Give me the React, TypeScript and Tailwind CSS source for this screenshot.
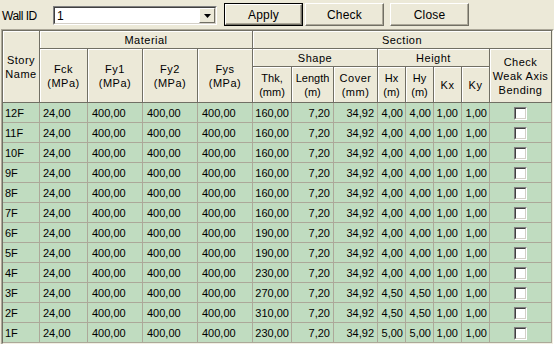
const font = { fontFamily: '"Liberation Sans", Arial, sans-serif' };

const cols =
  'grid grid-cols-[37px_48px_55px_55px_55px_39px_42px_44px_28px_28px_28px_28px_62px]';

const rows = [
  { story: '12F', thk: '160,00', h: '4,00' },
  { story: '11F', thk: '160,00', h: '4,00' },
  { story: '10F', thk: '160,00', h: '4,00' },
  { story: '9F', thk: '160,00', h: '4,00' },
  { story: '8F', thk: '160,00', h: '4,00' },
  { story: '7F', thk: '160,00', h: '4,00' },
  { story: '6F', thk: '190,00', h: '4,00' },
  { story: '5F', thk: '190,00', h: '4,00' },
  { story: '4F', thk: '230,00', h: '4,00' },
  { story: '3F', thk: '270,00', h: '4,50' },
  { story: '2F', thk: '310,00', h: '4,50' },
  { story: '1F', thk: '230,00', h: '5,00' },
];

const head =
  'flex items-center justify-center text-center border-r border-b border-[#716f64] bg-[#ece9d8] shadow-[inset_1px_1px_0_#fff] leading-[14px] tracking-[0.5px]';

const cell =
  'flex items-center pt-[2px] border-r border-b border-[#aca899] bg-[#c0dcc0] overflow-hidden whitespace-nowrap';

function Button({ label, isDefault }: { label: string; isDefault?: boolean }) {
  return (
    <div
      className={`mt-[3px] h-[23px] w-[79px] ${
        isDefault ? 'border border-black' : ''
      }`}
    >
      <div className="flex h-full w-full items-center justify-center border border-white border-r-[#716f64] border-b-[#716f64] bg-[#ece9d8] text-[12px] tracking-[0.2px] text-black shadow-[inset_-1px_-1px_0_#aca899]">
        {label}
      </div>
    </div>
  );
}

function CheckBox() {
  return (
    <span className="block h-[13px] w-[13px] border border-[#808080] border-r-white border-b-white">
      <span className="block h-full w-full border border-[#404040] border-r-[#d4d0c8] border-b-[#d4d0c8] bg-white" />
    </span>
  );
}

export default function App() {
  return (
    <div
      className="h-[344px] w-[554px] overflow-hidden bg-[#ece9d8] text-black"
      style={font}
    >
      {/* toolbar */}
      <div className="flex h-[29px] items-start">
        <div className="ml-[2px] mt-[8px] w-[51px] text-[12px] leading-[16px] tracking-[-0.5px]">
          Wall ID
        </div>
        <div className="mt-[6px] h-[19px] w-[164px] border border-[#808080] border-r-white border-b-white">
          <div className="flex h-full w-full items-center border border-[#404040] border-r-[#d4d0c8] border-b-[#d4d0c8] bg-white pl-[2px]">
            <span className="flex-1 text-[12px] leading-[14px]">1</span>
            <div className="flex h-[15px] w-[16px] items-center justify-center border border-white border-r-[#716f64] border-b-[#716f64] bg-[#ece9d8]">
              <svg width="7" height="4" viewBox="0 0 7 4">
                <path d="M0 0h7L3.5 4z" fill="#000" />
              </svg>
            </div>
          </div>
        </div>
        <div className="ml-[7px]">
          <Button label="Apply" isDefault />
        </div>
        <div className="ml-[2px]">
          <Button label="Check" />
        </div>
        <div className="ml-[6px]">
          <Button label="Close" />
        </div>
      </div>

      {/* grid */}
      <div className="ml-[1px] w-[553px] border border-[#aca899] border-r-white border-b-white">
        <div className="border border-[#716f64] border-r-[#f1efe2] border-b-[#f1efe2]">
          <div className={`${cols} grid-rows-[18px_18px_36px] text-[11px]`}>
            <div className={`${head} col-start-1 row-start-1 row-span-3`}>
              Story
              <br />
              Name
            </div>
            <div className={`${head} col-start-2 col-span-4 row-start-1`}>
              Material
            </div>
            <div className={`${head} col-start-6 col-span-8 row-start-1`}>
              Section
            </div>
            {['Fck', 'Fy1', 'Fy2', 'Fys'].map((n) => (
              <div key={n} className={`${head} row-start-2 row-span-2`}>
                {n}
                <br />
                (MPa)
              </div>
            ))}
            <div className={`${head} col-start-6 col-span-3 row-start-2`}>
              Shape
            </div>
            <div className={`${head} col-start-9 col-span-4 row-start-2`}>
              Height
            </div>
            <div className={`${head} col-start-13 row-start-2 row-span-2`}>
              Check
              <br />
              Weak Axis
              <br />
              Bending
            </div>
            <div className={`${head} col-start-6 row-start-3 tracking-[0px]`}>
              Thk,
              <br />
              (mm)
            </div>
            <div className={`${head} col-start-7 row-start-3 tracking-[0px]`}>
              Length
              <br />
              (m)
            </div>
            <div className={`${head} col-start-8 row-start-3`}>
              Cover
              <br />
              (mm)
            </div>
            <div className={`${head} col-start-9 row-start-3 tracking-[0px]`}>
              Hx
              <br />
              (m)
            </div>
            <div className={`${head} col-start-10 row-start-3 tracking-[0px]`}>
              Hy
              <br />
              (m)
            </div>
            <div className={`${head} col-start-11 row-start-3`}>Kx</div>
            <div className={`${head} col-start-12 row-start-3`}>Ky</div>
          </div>

          {rows.map((r) => (
            <div key={r.story} className={`${cols} h-[20px] text-[11px]`}>
              <div className={`${cell} pl-[2px]`}>{r.story}</div>
              <div className={`${cell} pl-[3px]`}>24,00</div>
              <div className={`${cell} pl-[4px]`}>400,00</div>
              <div className={`${cell} pl-[4px]`}>400,00</div>
              <div className={`${cell} pl-[4px]`}>400,00</div>
              <div className={`${cell} justify-end pr-[2px]`}>{r.thk}</div>
              <div className={`${cell} justify-end pr-[3px]`}>7,20</div>
              <div className={`${cell} justify-end pr-[3px]`}>34,92</div>
              <div className={`${cell} justify-end pr-[2px]`}>{r.h}</div>
              <div className={`${cell} justify-end pr-[2px]`}>{r.h}</div>
              <div className={`${cell} justify-end pr-[3px]`}>1,00</div>
              <div className={`${cell} justify-end pr-[2px]`}>1,00</div>
              <div className={`${cell} justify-center pt-0`}>
                <CheckBox />
              </div>
            </div>
          ))}
        </div>
      </div>
    </div>
  );
}
